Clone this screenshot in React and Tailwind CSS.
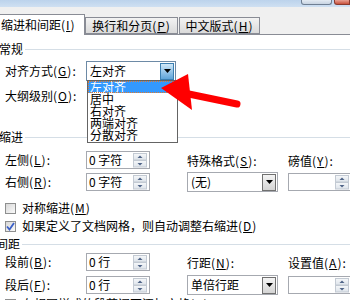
import React from 'react';

const FONT = "font-['Noto_Sans_CJK_SC','Noto_Sans',sans-serif]";

// access key with underline, e.g. (G)
const Key = ({ k }) => (
  <span className="tracking-[1px]">(<span className="underline">{k}</span>)</span>
);

const SpinArrows = () => (
  <svg width="14" height="15" viewBox="0 0 14 15" className="block">
    <defs>
      <linearGradient id="spinbg" x1="0" y1="0" x2="0" y2="1">
        <stop offset="0" stopColor="#f6f8fa" />
        <stop offset="1" stopColor="#dde3ea" />
      </linearGradient>
    </defs>
    <rect x="0.5" y="0.5" width="13" height="6.5" fill="url(#spinbg)" stroke="#c3cad3" />
    <rect x="0.5" y="7.5" width="13" height="6.5" fill="url(#spinbg)" stroke="#c3cad3" />
    <path d="M4.5 5 L7 2.5 L9.5 5 Z" fill="#4f6487" />
    <path d="M4.5 10 L9.5 10 L7 12.5 Z" fill="#4f6487" />
  </svg>
);

const SpinBox = ({ value, w = 'w-[64px]' }) => (
  <div className={`${w} h-[18px] border border-[#a6a9b0] bg-white flex items-center`}>
    <span className="flex-1 pl-[2px] leading-[14px] whitespace-nowrap">{value}</span>
    <div className="mr-[2px]">
      <SpinArrows />
    </div>
  </div>
);

const DropButton = ({ active }) => (
  <div
    className={`w-[14px] h-[17px] mr-px flex items-center justify-center border ${
      active
        ? 'border-[#3c7fb1] bg-gradient-to-b from-[#cfe8f8] to-[#5ea4d9]'
        : 'border-[#707070] bg-gradient-to-b from-[#f4f4f4] to-[#d4d4d4]'
    }`}
  >
    <svg width="7" height="4" viewBox="0 0 7 4">
      <path d="M0 0 L7 0 L3.5 4 Z" fill="#000" />
    </svg>
  </div>
);

const Select = ({ value, w, active }) => (
  <div className={`${w} h-[20px] border ${active ? 'border-[#6d8aa6]' : 'border-[#a6a9b0]'} bg-white flex items-center`}>
    <span className="flex-1 pl-[3px] leading-[14px] whitespace-nowrap">{value}</span>
    <DropButton active={active} />
  </div>
);

const SectionHeader = ({ title }) => (
  <div className="flex items-center h-[14px] -ml-px">
    <span className="leading-[14px] whitespace-nowrap">{title}</span>
    <div className="flex-1 h-px bg-[#d5dee6] ml-[2px] mt-px" />
  </div>
);

const CheckBox = ({ checked }) => (
  <div className="w-[11px] h-[11px] border border-[#8e8f8f] bg-gradient-to-br from-[#d8d8d8] to-[#fafafa] flex items-center justify-center">
    {checked && (
      <svg width="9" height="9" viewBox="0 0 9 9">
        <path d="M1 4.5 L3.5 7.5 L8 1" stroke="#3a5fc7" strokeWidth="1.8" fill="none" />
      </svg>
    )}
  </div>
);

const CheckRow = ({ checked, children }) => (
  <div className="flex items-center h-[16px] pl-[5px]">
    <CheckBox checked={checked} />
    <span className="ml-[6px] leading-[14px] whitespace-nowrap">{children}</span>
  </div>
);

const FieldLabel = ({ children }) => (
  <div className="w-[86px] pl-[5px] leading-[14px] whitespace-nowrap">{children}</div>
);

const alignOptions = ['左对齐', '居中', '右对齐', '两端对齐', '分散对齐'];

export default function App() {
  return (
    <div className={`relative w-[350px] h-[300px] overflow-hidden bg-[#f0f0f0] text-[12px] text-black ${FONT}`}>
      {/* title bar remnant */}
      <div className="h-[7px] bg-gradient-to-b from-[#bcd3ec] to-[#cfe0f2] flex justify-end items-start">
        <div className="w-[31px] h-[5px] border border-t-0 border-[#6f7f93] rounded-b-[3px] bg-gradient-to-b from-[#e4ebf3] to-[#c8d4e2]" />
        <div className="w-[16px] h-[5px] ml-[2px] border border-t-0 border-[#8a3a2e] rounded-bl-[3px] bg-gradient-to-b from-[#e8a093] to-[#c7503c]" />
      </div>

      {/* tabs */}
      <div className="mt-[6px] flex items-end h-[21px]">
        <div className="relative z-10 -ml-px w-[86px] h-[21px] -mb-px bg-white border border-b-0 border-[#898c95] flex items-center pl-px">
          <span className="leading-[14px] whitespace-nowrap">缩进和间距<Key k="I" /></span>
        </div>
        <div className="w-[93px] h-[17px] border border-[#898c95] bg-gradient-to-b from-[#f3f3f3] to-[#dadada] flex items-center justify-center">
          <span className="leading-[14px] whitespace-nowrap">换行和分页<Key k="P" /></span>
        </div>
        <div className="ml-px w-[81px] h-[17px] border border-[#898c95] bg-gradient-to-b from-[#f3f3f3] to-[#dadada] flex items-center justify-center">
          <span className="leading-[14px] whitespace-nowrap">中文版式<Key k="H" /></span>
        </div>
      </div>

      {/* panel */}
      <div className="bg-white border-t border-[#898c95] h-[300px] flex flex-col">
        <div className="mt-[7px]">
          <SectionHeader title="常规" />
        </div>
        <div className="mt-[5px] h-[20px] flex items-center">
          <FieldLabel>对齐方式<Key k="G" />:</FieldLabel>
          <Select value="左对齐" w="w-[90px]" active />
        </div>
        <div className="mt-[5px] h-[20px] flex items-center">
          <FieldLabel>大纲级别<Key k="O" />:</FieldLabel>
        </div>

        <div className="mt-[24px]">
          <SectionHeader title="缩进" />
        </div>
        <div className="mt-[7px] flex">
          <div className="flex flex-col gap-[4px]">
            <div className="flex items-center">
              <FieldLabel>左侧<Key k="L" />:</FieldLabel>
              <SpinBox value="0 字符" />
            </div>
            <div className="flex items-center">
              <FieldLabel>右侧<Key k="R" />:</FieldLabel>
              <SpinBox value="0 字符" />
            </div>
          </div>
          <div className="ml-[37px] pt-[3px] flex flex-col">
            <div className="leading-[14px] h-[14px] whitespace-nowrap">特殊格式<Key k="S" />:</div>
            <div className="mt-[4px]">
              <Select value="(无)" w="w-[91px]" />
            </div>
          </div>
          <div className="ml-[10px] pt-[3px] flex flex-col">
            <div className="leading-[14px] h-[14px] whitespace-nowrap">磅值<Key k="Y" />:</div>
            <div className="mt-[5px]">
              <SpinBox value="" w="w-[64px]" />
            </div>
          </div>
        </div>

        <div className="mt-[8px]">
          <CheckRow>对称缩进<Key k="M" /></CheckRow>
        </div>
        <div className="mt-[2px]">
          <CheckRow checked>如果定义了文档网格，则自动调整右缩进<Key k="D" /></CheckRow>
        </div>

        <div className="mt-[3px] -ml-[3px]">
          <SectionHeader title="间距" />
        </div>
        <div className="mt-[2px] flex">
          <div className="flex flex-col gap-[5px]">
            <div className="flex items-center">
              <FieldLabel>段前<Key k="B" />:</FieldLabel>
              <SpinBox value="0 行" />
            </div>
            <div className="flex items-center">
              <FieldLabel>段后<Key k="F" />:</FieldLabel>
              <SpinBox value="0 行" />
            </div>
          </div>
          <div className="ml-[37px] pt-[3px] flex flex-col">
            <div className="leading-[14px] h-[14px] whitespace-nowrap">行距<Key k="N" />:</div>
            <div className="mt-[5px]">
              <Select value="单倍行距" w="w-[91px]" />
            </div>
          </div>
          <div className="ml-[10px] pt-[3px] flex flex-col">
            <div className="leading-[14px] h-[14px] whitespace-nowrap">设置值<Key k="A" />:</div>
            <div className="mt-[6px]">
              <SpinBox value="" w="w-[64px]" />
            </div>
          </div>
        </div>
        <div className="mt-[1px]">
          <CheckRow>在相同样式的段落间不添加空格<Key k="C" /></CheckRow>
        </div>
      </div>

      {/* open dropdown list */}
      <div className="absolute left-[87px] top-[80px] w-[91px] h-[63px] bg-white border border-[#646464] p-0">
        {alignOptions.map((opt, i) => (
          <div
            key={opt}
            className={`h-[12px] leading-[12px] pl-[2px] whitespace-nowrap ${
              i === 0 ? 'bg-[#3399ff] text-white outline-1 outline-dotted outline-[#e07a2e] -outline-offset-1' : ''
            }`}
          >
            {opt}
          </div>
        ))}
      </div>

      {/* red annotation arrow */}
      <svg className="absolute left-0 top-0 pointer-events-none" width="350" height="300" viewBox="0 0 350 300">
        <line x1="184" y1="93" x2="237" y2="104" stroke="#ff0000" strokeWidth="7" strokeLinecap="round" />
        <polygon points="161,88 188,74 192,110" fill="#ff0000" />
      </svg>
    </div>
  );
}
